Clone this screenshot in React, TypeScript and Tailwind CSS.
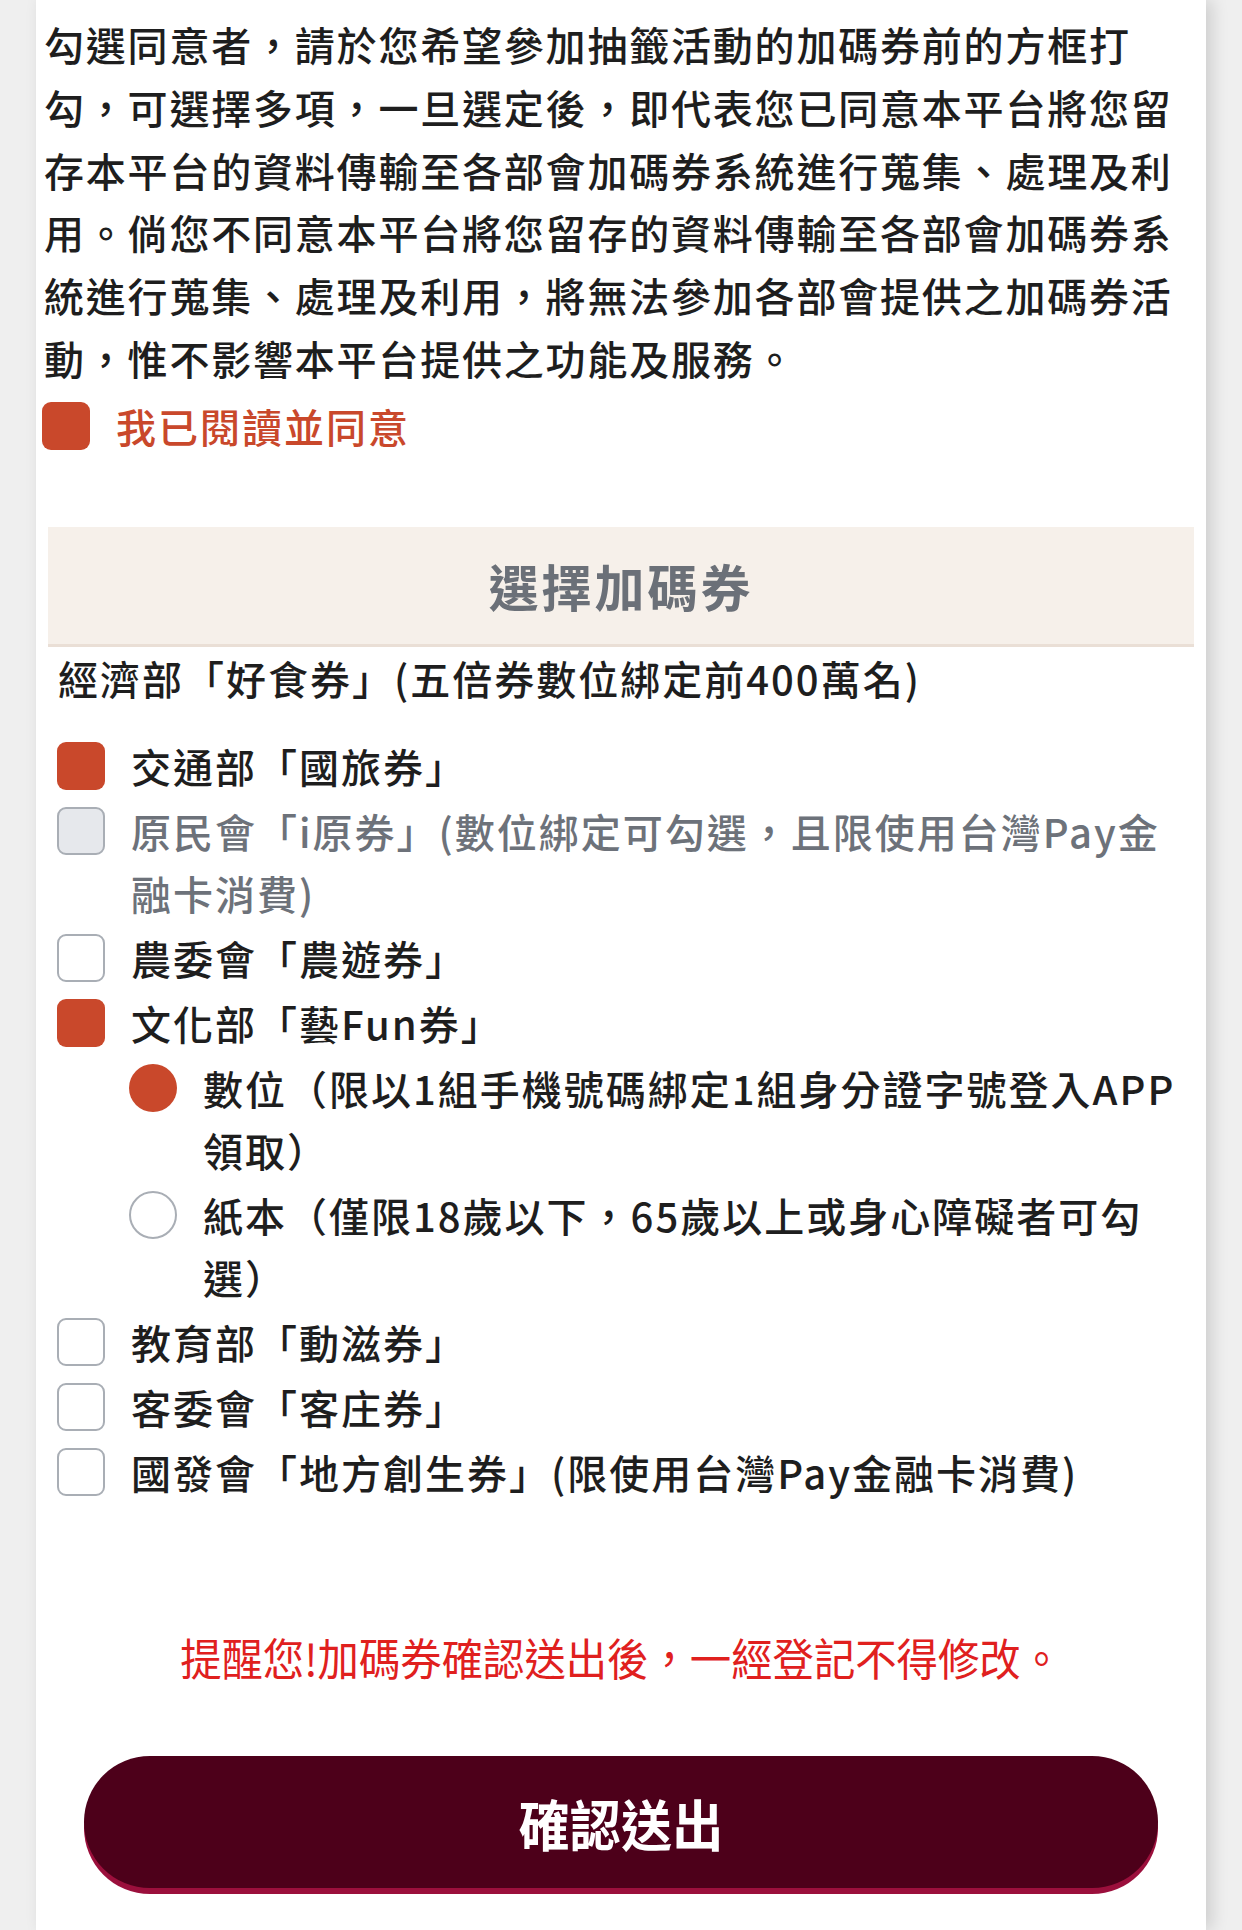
import React, { useState } from "react";

const FONT = { fontFamily: '"Noto Sans CJK TC", "Noto Sans", sans-serif' };

type Voucher = {
    id: string;
    label: React.ReactNode;
    disabled?: boolean;
};

// line breaks follow the original mobile layout
const VOUCHERS: Voucher[] = [
    { id: "motc", label: "交通部「國旅券」" },
    {
        id: "cip",
        label: (
            <>
                原民會「i原券」(數位綁定可勾選，且限使用台灣Pay金
                <br />
                融卡消費)
            </>
        ),
        disabled: true,
    },
    { id: "coa", label: "農委會「農遊券」" },
    { id: "moc", label: "文化部「藝Fun券」" },
];

const VOUCHERS_AFTER: Voucher[] = [
    { id: "moe", label: "教育部「動滋券」" },
    { id: "hakka", label: "客委會「客庄券」" },
    { id: "ndc", label: "國發會「地方創生券」(限使用台灣Pay金融卡消費)" },
];

// plain square checkbox, drawn like the mobile page does (filled when on)
const Box = ({ checked, disabled }: { checked?: boolean; disabled?: boolean }) => {
    if (checked) return <span className="block w-[48px] h-[48px] shrink-0 rounded-[9px] bg-[#c9482b]" />;
    return (
        <span
            className={
                disabled
                    ? "block w-[48px] h-[48px] shrink-0 rounded-[9px] border-[2.5px] border-[#a9aeb5] bg-[#e6e8ec]"
                    : "block w-[48px] h-[48px] shrink-0 rounded-[9px] border-[2.5px] border-[#a9aeb5] bg-white"
            }
        />
    );
};

const Radio = ({ checked }: { checked?: boolean }) =>
    checked ? (
        <span className="block w-[48px] h-[48px] shrink-0 rounded-full bg-[#c9482b]" />
    ) : (
        <span className="block w-[48px] h-[48px] shrink-0 rounded-full border-[2.5px] border-[#a9aeb5] bg-white" />
    );

const Row = ({ v, checked, onToggle }: { v: Voucher; checked: boolean; onToggle: () => void }) => (
    <div
        className="flex items-start gap-[26px] cursor-pointer"
        onClick={() => !v.disabled && onToggle()}
    >
        <span className="mt-[7px]">
            <Box checked={checked} disabled={v.disabled} />
        </span>
        <span className={v.disabled ? "text-[#6d727a]" : "text-[#1e1e1e]"}>{v.label}</span>
    </div>
);

export default function App() {
    const [agree, setAgree] = useState(true);
    const [picked, setPicked] = useState<Record<string, boolean>>({ motc: true, moc: true });
    const [mocType, setMocType] = useState<"digital" | "paper">("digital");

    const toggle = (id: string) => setPicked((p) => ({ ...p, [id]: !p[id] }));

    return (
        <div className="min-h-[1930px] bg-[#efefef]" style={FONT}>
            <div className="ml-[36px] w-[1170px] min-h-[1930px] bg-white pt-[13px] shadow-[6px_0_16px_rgba(0,0,0,0.14)]">
                {/* consent text */}
                <p className="px-[8px] text-[40px] leading-[62.8px] tracking-[1.8px] font-medium text-[#1e1e1e]">
                    勾選同意者，請於您希望參加抽籤活動的加碼券前的方框打勾，可選擇多項，一旦選定後，即代表您已同意本平台將您留存本平台的資料傳輸至各部會加碼券系統進行蒐集、處理及利用。倘您不同意本平台將您留存的資料傳輸至各部會加碼券系統進行蒐集、處理及利用，將無法參加各部會提供之加碼券活動，惟不影響本平台提供之功能及服務。
                </p>

                <div
                    className="mt-[12px] px-[6px] flex items-center gap-[26px] cursor-pointer"
                    onClick={() => setAgree(!agree)}
                >
                    <Box checked={agree} />
                    <span className="text-[40px] leading-[48px] tracking-[2px] font-medium text-[#c9482b]">我已閱讀並同意</span>
                </div>

                {/* section header */}
                <div className="mt-[77px] mx-[12px] h-[120px] bg-[#f6f0ea] border-b-[3px] border-[#eadfd6] flex items-center justify-center">
                    <h2 className="text-[50px] font-bold tracking-[3px] text-[#6b7078]">選擇加碼券</h2>
                </div>

                <p className="pl-[22px] text-[40px] leading-[62px] tracking-[2px] font-medium text-[#1e1e1e]">
                    經濟部「好食券」(五倍券數位綁定前400萬名)
                </p>

                {/* voucher list */}
                <div className="mt-[26px] pl-[21px] pr-[16px] flex flex-col gap-[3px] text-[40px] leading-[62px] tracking-[2px] font-medium">
                    {VOUCHERS.map((v) => (
                        <Row key={v.id} v={v} checked={!!picked[v.id]} onToggle={() => toggle(v.id)} />
                    ))}

                    <div className="ml-[72px] flex items-start gap-[26px] cursor-pointer" onClick={() => setMocType("digital")}>
                        <span className="mt-[7px]">
                            <Radio checked={mocType === "digital"} />
                        </span>
                        <span className="text-[#1e1e1e]">
                            數位（限以1組手機號碼綁定1組身分證字號登入APP
                            <br />
                            領取）
                        </span>
                    </div>
                    <div className="ml-[72px] flex items-start gap-[26px] cursor-pointer" onClick={() => setMocType("paper")}>
                        <span className="mt-[7px]">
                            <Radio checked={mocType === "paper"} />
                        </span>
                        <span className="text-[#1e1e1e]">
                            紙本（僅限18歲以下，65歲以上或身心障礙者可勾
                            <br />
                            選）
                        </span>
                    </div>

                    {VOUCHERS_AFTER.map((v) => (
                        <Row key={v.id} v={v} checked={!!picked[v.id]} onToggle={() => toggle(v.id)} />
                    ))}
                </div>

                {/* warning + submit */}
                <div className="mt-[124px] flex justify-center">
                    <p className="text-[44px] leading-[60px] text-[#e0201e] scale-x-[0.94]">
                        提醒您!加碼券確認送出後，一經登記不得修改。
                    </p>
                </div>

                <div className="mt-[69px] px-[48px]">
                    <button className="w-full h-[132px] rounded-full bg-[#4d001a] shadow-[0_6px_0_#9b0f3c] text-white">
                        <span className="inline-block text-[55px] font-bold scale-x-[0.93]">確認送出</span>
                    </button>
                </div>
            </div>
        </div>
    );
}
